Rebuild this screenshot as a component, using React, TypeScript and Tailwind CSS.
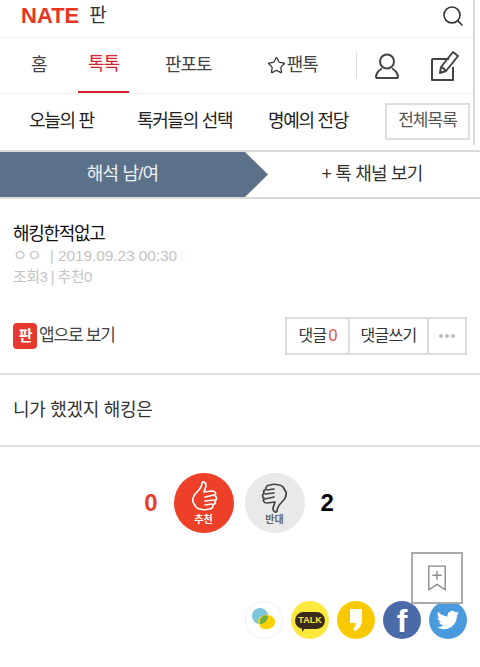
import { Search, Star } from "lucide-react"

const font = { fontFamily: '"Liberation Sans", "Noto Sans CJK KR", sans-serif' }

function ThumbUp({ className }: { className?: string }) {
  return (
    <svg viewBox="0 0 28 32" className={className} fill="none" stroke="currentColor" strokeWidth="1.7" strokeLinecap="round" strokeLinejoin="round">
      <path d="M3 21c-1-4 1-7 4-10 3-3 5-6 5-9 0-2 4-1 4 2 0 3-2 6-2 7l8 -1c4 0 4 3 3 5 2 1 2 3 0 5 1 2 0 3-2 4 0 3-2 4-4 4-3 1-6 1-9 0-2 0-3-1-4-2l-3-5z" />
      <path d="M15 16l9-2M15 20l9-1M15 24l7-1" />
    </svg>
  )
}

export default function App() {
  return (
    <div style={font} className="relative h-[667px] w-[480px] overflow-hidden bg-white text-[#222]">
      <div className="mr-[5px] mb-[5px] border-r-[2px] border-[#d8d8d8]">
        {/* top bar */}
        <header className="flex h-[38px] items-center justify-between border-b border-[#f0f0f0] pr-[8px] pb-[6px] pl-[21px]">
          <div className="flex items-center gap-[10px]">
            <span className="text-[22px] leading-none font-bold text-[#e8351f]">NATE</span>
            <span className="text-[19px] leading-none text-[#333]">판</span>
          </div>
          <Search className="h-[24px] w-[24px] text-[#333]" strokeWidth={1.6} />
        </header>

        {/* main nav */}
        <nav className="flex h-[56px] items-center border-b border-[#f0f0f0] text-[18px] tracking-[-1px] whitespace-nowrap text-[#444]">
          <span className="ml-[31px] w-[47px]">홈</span>
          <span className="flex h-full w-[51px] items-center justify-center border-b-[2px] border-[#d9232e] text-[#d9232e]">톡톡</span>
          <span className="ml-[36px]">판포토</span>
          <span className="ml-[55px] flex items-center gap-[1px]">
            <Star className="h-[19px] w-[19px] text-[#333]" strokeWidth={1.6} />
            팬톡
          </span>
          <span className="ml-[38px] h-[25px] w-px bg-[#ddd]" />
          <svg viewBox="0 0 26 26" className="ml-[17px] h-[26px] w-[26px] text-[#444]" fill="none" stroke="currentColor" strokeWidth="2">
            <circle cx="13" cy="8.500" r="7" />
            <path d="M2 25c0-5 2-7 6-9.500M24 25c0-5-2-7-6-9.500M2 25h22" />
          </svg>
          <svg viewBox="0 0 30 32" className="ml-[30px] h-[32px] w-[30px] text-[#444]" fill="none" stroke="currentColor" strokeWidth="2" strokeLinejoin="round">
            <path d="M19 9H3a1.500 1.500 0 0 0-1 1v20h21V17" />
            <path d="M10 23l1-6L23 2l5 4-12 15z" />
            <path d="M12 17l4 4" />
          </svg>
        </nav>

        {/* sub nav */}
        <div className="flex h-[51px] items-center pt-[3px] text-[18px] tracking-[-1.3px] whitespace-nowrap text-[#222]">
          <span className="ml-[29px] w-[108px]">오늘의 판</span>
          <span className="w-[131px]">톡커들의 선택</span>
          <span className="w-[117px]">명예의 전당</span>
          <span className="flex h-[37px] w-[85px] items-center justify-center border-2 border-[#ddd] text-[17px] tracking-[-1px] text-[#555]">전체목록</span>
        </div>
      </div>

      {/* channel tabs */}
      <div className="flex h-[49px] border-y-2 border-[#d9d9d9] text-[18px] tracking-[-0.8px] whitespace-nowrap">
        <div className="flex w-[268px] items-center justify-center bg-[#5b718a] pr-[23px] text-[#eef1f4] [clip-path:polygon(0_0,245px_0,268px_50%,245px_100%,0_100%)]">
          해석 남/여
        </div>
        <div className="flex flex-1 items-center justify-center pr-[4px] text-[#333]">+ 톡 채널 보기</div>
      </div>

      {/* post head */}
      <div className="px-[13px] pt-[23px]">
        <h1 className="text-[18px] leading-[24px] tracking-[-1.3px] text-[#111]">해킹한적없고</h1>
        <p className="text-[15.500px] leading-[20px] text-[#c4c4c4]">
          ㅇㅇ <span className="ml-[4px] tracking-[-0.1px]">| 2019.09.23 00:30</span>
        </p>
        <p className="text-[15px] leading-[21px] tracking-[-0.6px] text-[#c4c4c4]">조회3 | 추천0</p>
      </div>

      {/* app link + comment buttons */}
      <div className="mt-[30px] flex h-[38px] items-center justify-between px-[13px]">
        <div className="flex items-center gap-[2px] text-[17px] tracking-[-1.200px] text-[#444]">
          <span className="flex h-[26px] w-[24px] items-center justify-center rounded-[4px] bg-[#e5392f] text-[15px] font-bold text-white">판</span>
          앱으로 보기
        </div>
        <div className="flex h-[38px] border-2 border-[#ddd] text-[16px] tracking-[-0.7px] text-[#333]">
          <span className="flex w-[63px] items-center justify-center gap-[2px] border-r-2 border-[#ddd]">
            댓글 <span className="text-[#d9534f]">0</span>
          </span>
          <span className="flex w-[79px] items-center justify-center border-r-2 border-[#ddd]">댓글쓰기</span>
          <span className="flex w-[36px] items-center justify-center gap-[2px]">
            <i className="h-[4px] w-[4px] rounded-full bg-[#bbb]" />
            <i className="h-[4px] w-[4px] rounded-full bg-[#bbb]" />
            <i className="h-[4px] w-[4px] rounded-full bg-[#bbb]" />
          </span>
        </div>
      </div>

      {/* body */}
      <div className="mt-[18px] flex h-[74px] items-center border-y-2 border-[#ddd] px-[13px] pt-[1px] text-[18px] tracking-[-0.3px] text-[#333]">
        니가 했겠지 해킹은
      </div>

      {/* vote */}
      <div className="mt-[26px] flex items-center justify-center pr-[2px]">
        <span className="mr-[16px] text-[24px] font-bold text-[#e8402a]">0</span>
        <button className="flex h-[60px] w-[60px] flex-col items-center justify-center rounded-full bg-[#ee4028] text-white">
          <ThumbUp className="h-[32px] w-[28px]" />
          <span className="text-[10px] leading-[13px] font-bold">추천</span>
        </button>
        <button className="ml-[11px] flex h-[60px] w-[60px] flex-col items-center justify-center rounded-full bg-[#e9e9e9] text-[#444]">
          <ThumbUp className="h-[32px] w-[28px] rotate-180" />
          <span className="text-[10px] leading-[13px] font-bold text-[#666]">반대</span>
        </button>
        <span className="ml-[16px] text-[24px] font-bold text-black">2</span>
      </div>

      {/* bookmark */}
      <button className="absolute top-[552px] left-[411px] flex h-[52px] w-[52px] items-center justify-center border-2 border-[#aaa] bg-white">
        <svg viewBox="0 0 22 30" className="h-[28px] w-[20px]" fill="none" stroke="#888" strokeWidth="1.5">
          <path d="M2 2h18v26l-9-6-9 6z" />
          <path d="M11 7v10M6 12h10" />
        </svg>
      </button>

      {/* share */}
      <div className="mt-[68px] flex justify-end gap-[8px] pr-[13px]">
        <span className="flex h-[38px] w-[38px] items-center justify-center rounded-full border border-[#f0f0f0]">
          <svg viewBox="0 0 32 32" className="h-[32px] w-[32px]">
            <circle cx="12" cy="12" r="8" fill="#7cc6dc" />
            <path d="M19 11c5 0 8 3 8 7s-3 7-8 7c-1 0-2 0-3 0-2 0-4-2-6-7 0-4 4-7 9-7z" fill="#ffd200" />
            <path d="M12 20a8 8 0 0 0 8-8c-5-2-9 2-8 8z" fill="#72ad3f" />
          </svg>
        </span>
        <span className="relative flex h-[38px] w-[38px] items-center justify-center rounded-full bg-[#ffe83c]">
          <span className="rounded-[9px] bg-[#3a2a1c] px-[3px] text-[9px] leading-[17px] font-bold text-[#ffe83c]">TALK</span>
          <i className="absolute top-[25px] left-[11px] h-0 w-0 border-t-[6px] border-r-[5px] border-t-[#3a2a1c] border-r-transparent" />
        </span>
        <span className="flex h-[38px] w-[38px] items-center justify-center rounded-full bg-[#f9c900]">
          <svg viewBox="0 0 16 24" className="h-[24px] w-[16px]" fill="#fff">
            <path d="M2 1h12v11c0 5-3 9-7 11l-2-2c2-2 3-4 3-6H2z" />
          </svg>
        </span>
        <span className="flex h-[38px] w-[38px] items-end justify-center overflow-hidden rounded-full bg-[#4a6ba8] text-[32px] leading-[36px] font-bold text-white">f</span>
        <span className="flex h-[38px] w-[38px] items-center justify-center rounded-full bg-[#4a9ade]">
          <svg viewBox="0 0 24 24" className="h-[24px] w-[24px]" fill="#fff">
            <path d="M23 5c-.8.4-1.700.6-2.600.7.900-.6 1.600-1.400 2-2.500-.9.500-1.800.9-2.900 1.100A4.600 4.600 0 0 0 11.700 8.500C7.900 8.300 4.500 6.500 2.200 3.700c-1.200 2.100-.6 4.800 1.400 6.100-.7 0-1.400-.2-2.100-.6 0 2.200 1.600 4.200 3.700 4.700-.7.200-1.400.2-2.100.1.600 1.900 2.300 3.200 4.300 3.200A9.300 9.300 0 0 1 .6 19.100 13 13 0 0 0 7.700 21.200c8.600 0 13.500-7.300 13.200-13.800.9-.6 1.700-1.400 2.100-2.400z" />
          </svg>
        </span>
      </div>
    </div>
  )
}
